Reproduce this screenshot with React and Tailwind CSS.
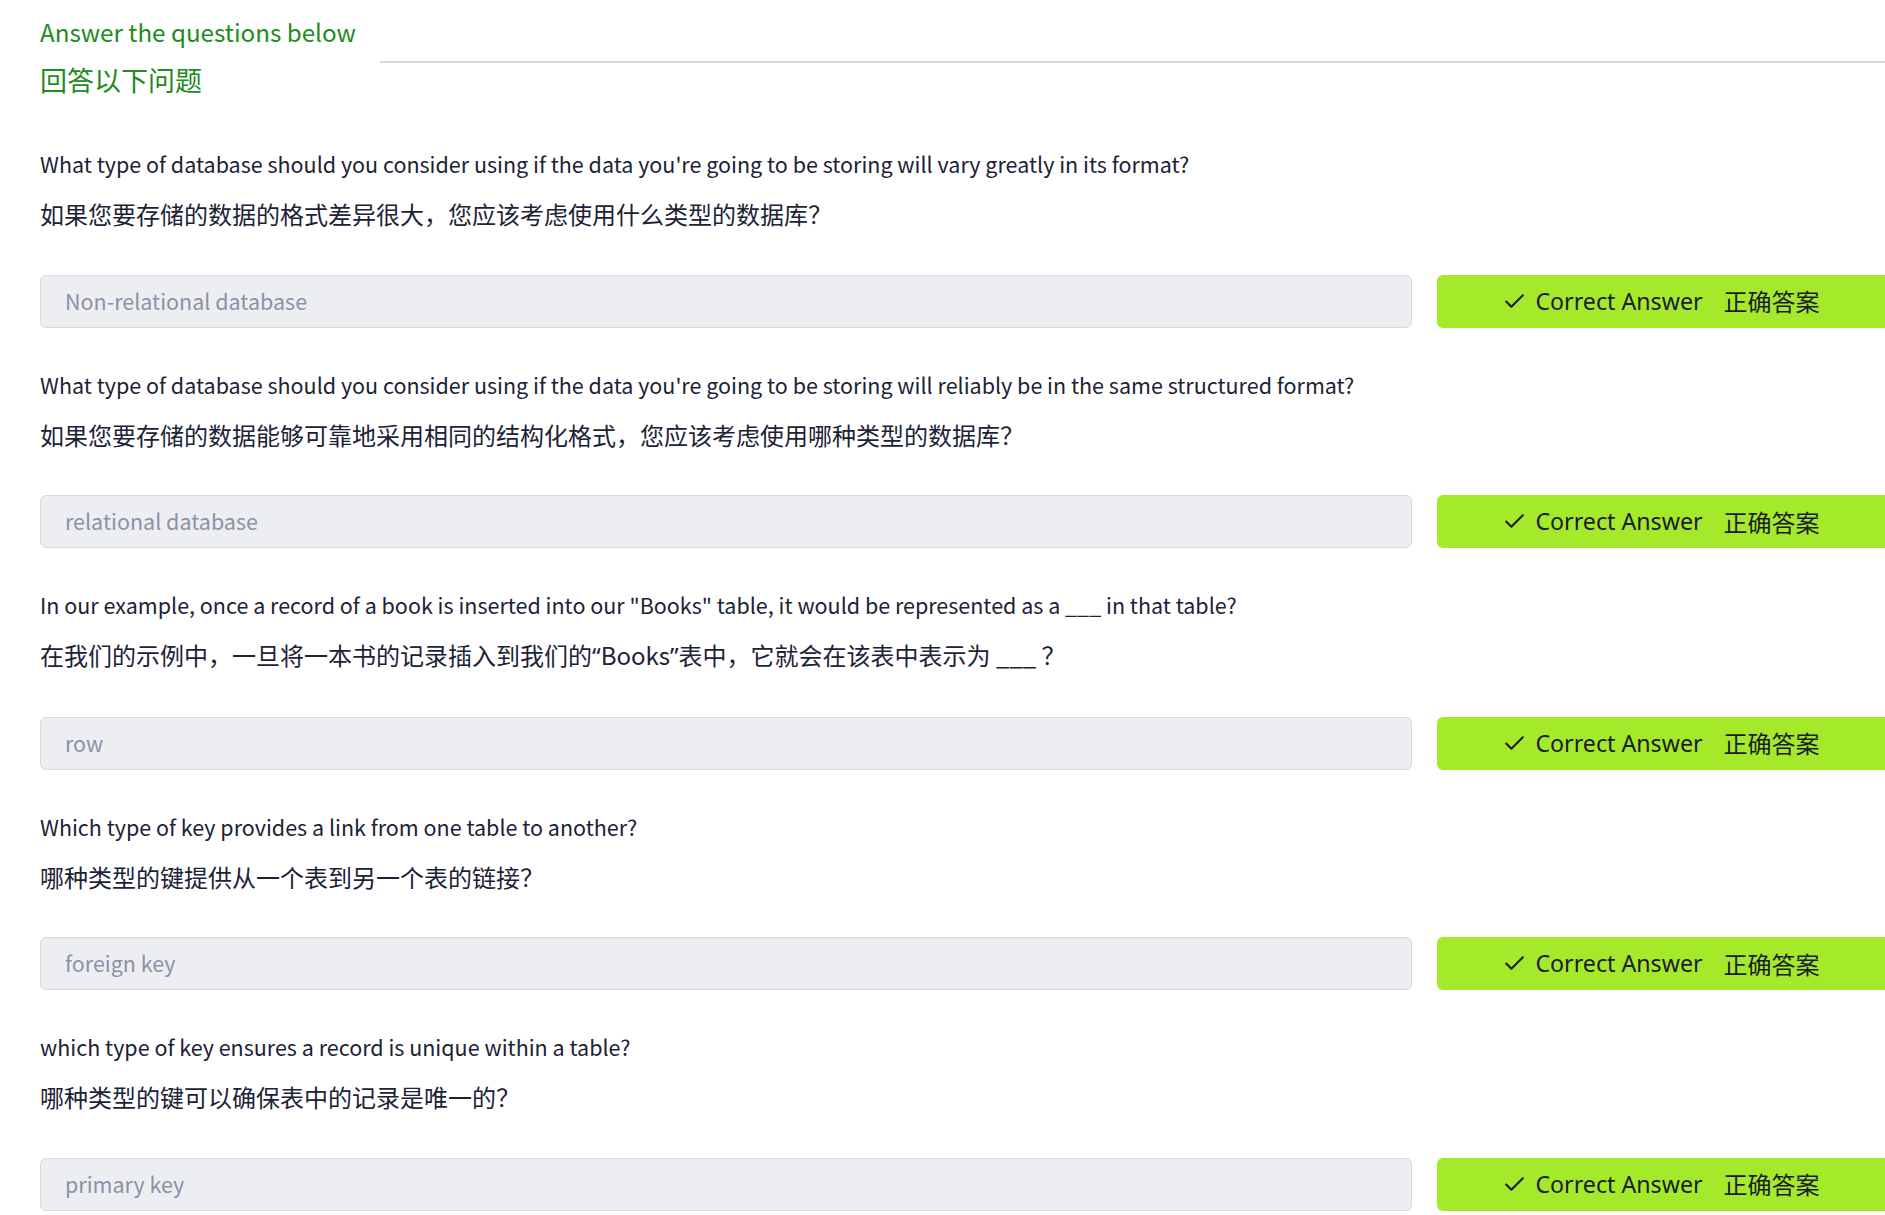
import { Check } from 'lucide-react';

const q = (s) => <span className="font-['Noto_Sans',sans-serif]">{s}</span>;

const questions = [
    {
        id: 1,
        en: "What type of database should you consider using if the data you're going to be storing will vary greatly in its format?",
        zh: '如果您要存储的数据的格式差异很大，您应该考虑使用什么类型的数据库？',
        answer: 'Non-relational database',
    },
    {
        id: 2,
        en: "What type of database should you consider using if the data you're going to be storing will reliably be in the same structured format?",
        zh: '如果您要存储的数据能够可靠地采用相同的结构化格式，您应该考虑使用哪种类型的数据库？',
        answer: 'relational database',
    },
    {
        id: 3,
        en: 'In our example, once a record of a book is inserted into our "Books" table, it would be represented as a ___ in that table?',
        zh: (
            <>
                在我们的示例中，一旦将一本书的记录插入到我们的{q('“')}Books{q('”')}表中，它就会在该表中表示为 ___ ？
            </>
        ),
        answer: 'row',
    },
    {
        id: 4,
        en: 'Which type of key provides a link from one table to another?',
        zh: '哪种类型的键提供从一个表到另一个表的链接？',
        answer: 'foreign key',
    },
    {
        id: 5,
        en: 'which type of key ensures a record is unique within a table?',
        zh: '哪种类型的键可以确保表中的记录是唯一的？',
        answer: 'primary key',
    },
];

const cjk = "font-['Noto_Sans_CJK_SC',sans-serif]";

export default function App() {
    return (
        <div className={`min-h-screen bg-white pl-[40px] pt-[14px] overflow-hidden ${cjk}`}>
            {/* header */}
            <div className="flex items-start">
                <div className="w-[340px] shrink-0 whitespace-nowrap text-[#228b22]">
                    <div className="text-[24.2px] leading-[35px]">Answer the questions below</div>
                    <div className="text-[27px] leading-[35px] mt-[13px]">回答以下问题</div>
                </div>
                <div className="flex-1 h-[2px] bg-[#d5d9df] mt-[47px]" />
            </div>

            <div className="flex flex-col gap-[42px] mt-[52px]">
                {questions.map((item) => (
                    <div key={item.id} className="flex flex-col">
                        <p className="text-[21.5px] leading-[30px] text-[#1d2236] whitespace-nowrap">{item.en}</p>
                        <p className="text-[24px] leading-[34px] text-[#1d2236] mt-[18px] whitespace-nowrap">{item.zh}</p>
                        <div className="flex items-center gap-[25px] mt-[43.5px]">
                            <div className="flex-1 h-[53px] flex items-center px-[24px] bg-[#edeef2] border border-[#d6d9df] rounded-[6px] text-[21.5px] text-[#8a93a6]">
                                {item.answer}
                            </div>
                            <button className="w-[448px] shrink-0 h-[53px] rounded-l-[6px] bg-[#a4ea2a] flex items-center justify-center text-[#1c1c2a]">
                                <Check size={25} strokeWidth={2} className="mr-[8px]" />
                                <span className="font-['Noto_Sans',sans-serif] text-[23.2px]">Correct Answer</span>
                                <span className={`ml-[21px] text-[24px] ${cjk}`}>正确答案</span>
                            </button>
                        </div>
                    </div>
                ))}
            </div>
        </div>
    );
}
